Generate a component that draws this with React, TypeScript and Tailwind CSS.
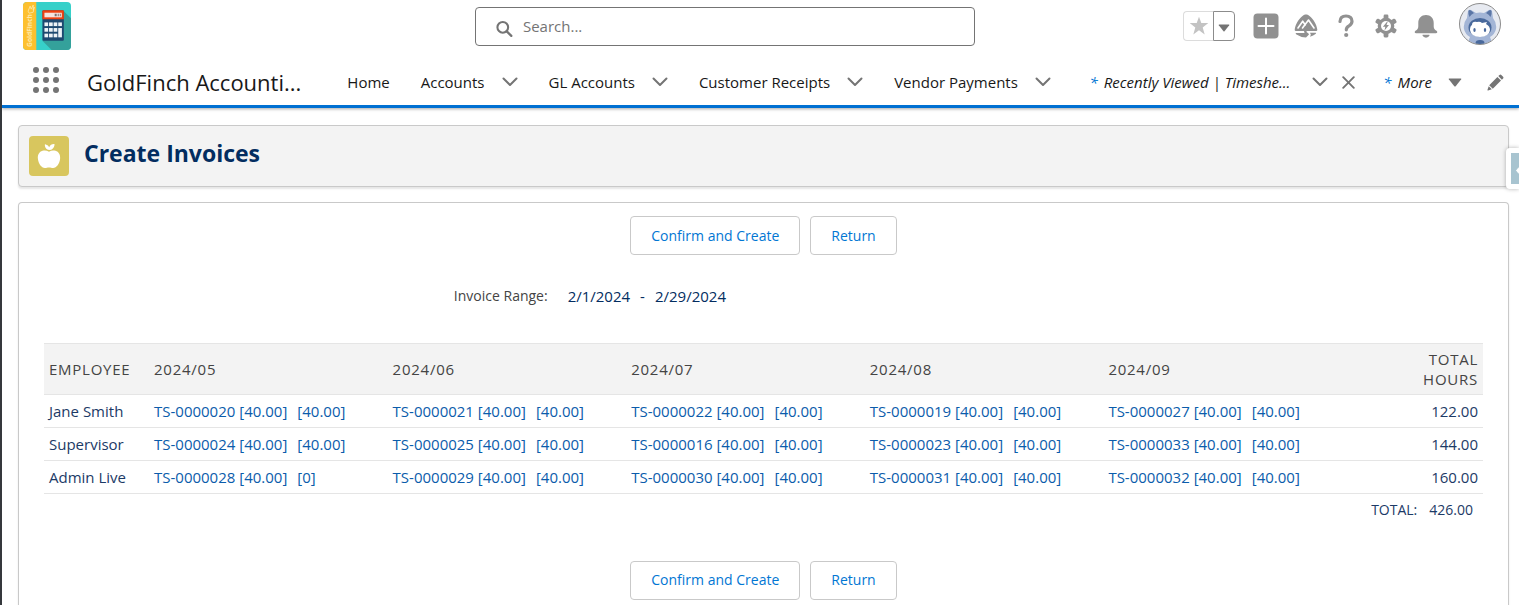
import { ReactNode } from 'react';

const tabs = ['Accounts', 'GL Accounts', 'Customer Receipts', 'Vendor Payments'];

const periods = ['2024/05', '2024/06', '2024/07', '2024/08', '2024/09'];

const rows = [
  {
    employee: 'Jane Smith',
    sheets: [
      ['TS-0000020', '40.00', '40.00'],
      ['TS-0000021', '40.00', '40.00'],
      ['TS-0000022', '40.00', '40.00'],
      ['TS-0000019', '40.00', '40.00'],
      ['TS-0000027', '40.00', '40.00']
    ],
    total: '122.00'
  },
  {
    employee: 'Supervisor',
    sheets: [
      ['TS-0000024', '40.00', '40.00'],
      ['TS-0000025', '40.00', '40.00'],
      ['TS-0000016', '40.00', '40.00'],
      ['TS-0000023', '40.00', '40.00'],
      ['TS-0000033', '40.00', '40.00']
    ],
    total: '144.00'
  },
  {
    employee: 'Admin Live',
    sheets: [
      ['TS-0000028', '40.00', '0'],
      ['TS-0000029', '40.00', '40.00'],
      ['TS-0000030', '40.00', '40.00'],
      ['TS-0000031', '40.00', '40.00'],
      ['TS-0000032', '40.00', '40.00']
    ],
    total: '160.00'
  }
];

function Logo() {
  return (
    <svg viewBox="0 0 47 47" className="h-12 w-12 shrink-0" role="img" aria-label="GoldFinch">
      <defs>
        <clipPath id="logo-clip">
          <rect width="47" height="47" rx="4" />
        </clipPath>
      </defs>
      <g clipPath="url(#logo-clip)">
        <rect width="47" height="47" fill="#37d0c9" />
        <path d="M40 9l7 7v31H28l-9-9z" fill="#34a19b" />
        <rect width="13" height="47" fill="#fdc02f" />
        <text x="-44" y="9" transform="rotate(-90)" fontSize="6.500" fontWeight="700" fill="#fde9a9" fontFamily="Open Sans, sans-serif">
          GoldFinch
        </text>
        <path d="M5 9l2-5 1 3 2-4v5l1-3-1 5-4 1z" fill="none" stroke="#fde9a9" strokeWidth=".8" />
        <rect x="19" y="8" width="21" height="30" rx="1" fill="#1d4870" />
        <path d="M19 17V9a1 1 0 011-1h19a1 1 0 011 1v8z" fill="#ee4211" />
        <rect x="21" y="10.500" width="17" height="4.500" fill="#f6e5df" />
        <path d="M31 11.500h2v2.500h-2zM34 11.500h1v2.500h-1zM36 11.500h1v2.500h-1z" fill="#7c706f" />
        <g fill="#eef3f7">
          <rect x="21" y="20" width="3.600" height="3.600" />
          <rect x="25.500" y="20" width="3.600" height="3.600" />
          <rect x="30" y="20" width="3.600" height="3.600" />
          <rect x="34.500" y="20" width="3.600" height="3.600" />
          <rect x="21" y="25.500" width="3.600" height="3.600" />
          <rect x="25.500" y="25.500" width="3.600" height="3.600" />
          <rect x="30" y="25.500" width="3.600" height="3.600" />
          <rect x="34.500" y="25.500" width="3.600" height="9.100" />
          <rect x="21" y="31" width="3.600" height="3.600" />
          <rect x="25.500" y="31" width="3.600" height="3.600" />
          <rect x="30" y="31" width="3.600" height="3.600" />
        </g>
      </g>
    </svg>
  );
}

function Avatar() {
  return (
    <svg viewBox="0 0 42 42" className="h-[42px] w-[42px]">
      <defs>
        <clipPath id="avatar-clip">
          <circle cx="21" cy="21" r="20" />
        </clipPath>
      </defs>
      <circle cx="21" cy="21" r="20.500" fill="#e7eaf1" />
      <g clipPath="url(#avatar-clip)">
        <path d="M9 8q1-2 3-1l5 3q4-1 8 0l5-3q2-1 3 1l1 7q4 5 3 11-1 5-6 8l3 8H8l3-8q-5-3-6-8-1-6 3-11z" fill="#a3b5d6" />
        <path d="M9.500 8q1-1.500 2.500-.5l3 2.500q-3 1.500-4.500 4-1.500-3-1-6zM32.500 8q-1-1.500-2.500-.5L27 10q3 1.500 4.500 4 1.500-3 1-6z" fill="#5b76a6" />
        <ellipse cx="21" cy="24.500" rx="11.500" ry="9.500" fill="#49699c" />
        <path d="M11 27q0-4 2-5 0-4 5-3 3-1 5 1l5-1-1 2q4 2 4 6-1 7-10 7T11 27z" fill="#fff" />
        <ellipse cx="15.500" cy="27" rx="1.200" ry="1.900" fill="#49699c" />
        <ellipse cx="26" cy="27" rx="1.200" ry="1.900" fill="#49699c" />
        <ellipse cx="21" cy="40" rx="4.500" ry="3" fill="#49699c" />
      </g>
      <circle cx="21" cy="21" r="20.500" fill="none" stroke="#8c8c8c" />
    </svg>
  );
}

function Chevron() {
  return (
    <svg viewBox="0 0 16 10" className="h-[10px] w-4">
      <path d="M1.500 1.500L8 8l6.500-6.500" fill="none" stroke="#747474" strokeWidth="2" strokeLinecap="round" strokeLinejoin="round" />
    </svg>
  );
}

function IconButton({ label, children }: { label: string; children: ReactNode }) {
  return (
    <button aria-label={label} className="flex h-[26px] w-[26px] items-center justify-center text-[#919191]">
      {children}
    </button>
  );
}

function HeaderIcons() {
  return (
    <div className="flex items-center gap-5">
      <div className="flex items-center gap-[14px] pt-1">
        <div className="mr-1 flex">
          <button aria-label="Favorite" className="flex h-[30px] w-[30px] items-center justify-center rounded-l border border-r-0 border-[#dcdcdc]">
            <svg viewBox="0 0 20 20" className="h-5 w-5">
              <path d="M10 .8l2.300 6.300h7l-5.600 4.300 2 7.100L10 14.300l-5.700 4.200 2-7.100L.7 7.100h7z" fill="#c3c3c3" />
            </svg>
          </button>
          <button aria-label="Favorites list" className="flex h-[30px] w-[22px] items-center justify-center rounded-r border border-[#8c8c8c]">
            <svg viewBox="0 0 12 8" className="mt-1 h-2 w-3">
              <path d="M1.200.5h9.600q.8 0 .4.700L6.500 7.200q-.5.500-1 0L.8 1.200Q.4.500 1.200.5z" fill="#747474" />
            </svg>
          </button>
        </div>
        <IconButton label="Global actions">
          <svg viewBox="0 0 26 26" className="h-[26px] w-[26px]">
            <rect x=".5" y=".5" width="25" height="25" rx="4" fill="currentColor" />
            <path d="M13 5.500v15M5.500 13h15" stroke="#fff" strokeWidth="2" strokeLinecap="round" />
          </svg>
        </IconButton>
        <IconButton label="Guidance center">
          <svg viewBox="0 0 24 24" className="h-6 w-6">
            <path d="M12 .5c1 0 2.200.4 3.500 1.400C19.500 5 22.500 10 23.300 15.500q.2 1.500-1.300 1.500h-8.500q-1.500 0-1 .9l2 1.600q1.200 1.200-.5 2L12 23.500q-5.500-.2-9.500-3-1.500-1-.5-1.500h8.500L10 17H2q-1.500 0-1.300-1.500C1.500 10 4.500 5 8.500 1.900 9.800.9 11 .5 12 .5z" fill="currentColor" />
            <path d="M16 18.800h5.800q.8.400-.3 1.300-2 1.800-5.500 2.700 1.700-2.200 0-4z" fill="currentColor" />
            <path d="M4 14l4.700-6.800 2.600 3.800M8.500 14l6-8 5.500 8" fill="none" stroke="#fff" strokeWidth="1.600" strokeLinejoin="round" strokeLinecap="round" />
          </svg>
        </IconButton>
        <IconButton label="Help">
          <svg viewBox="0 0 16 24" className="h-6 w-4">
            <path d="M2 7.500Q2.200 2 8 2t6 5.200q0 2.800-3 4.600-2.700 1.500-2.700 4" fill="none" stroke="currentColor" strokeWidth="3.200" strokeLinecap="round" />
            <circle cx="8.200" cy="21" r="2.100" fill="currentColor" />
          </svg>
        </IconButton>
        <IconButton label="Setup">
          <svg viewBox="0 0 24 24" className="h-6 w-6">
            <g fill="currentColor">
              <circle cx="12" cy="12" r="8.300" />
              <rect x="9.600" y=".6" width="4.800" height="22.800" rx="1.300" />
              <rect x="9.600" y=".6" width="4.800" height="22.800" rx="1.300" transform="rotate(60 12 12)" />
              <rect x="9.600" y=".6" width="4.800" height="22.800" rx="1.300" transform="rotate(120 12 12)" />
            </g>
            <circle cx="12" cy="12" r="5" fill="#fff" />
            <path d="M13.200 7.500L8.900 12.700h2.400l-.8 3.800 4.500-5.400h-2.500l1.300-3.600z" fill="currentColor" />
          </svg>
        </IconButton>
        <IconButton label="Notifications">
          <svg viewBox="0 0 24 24" className="h-6 w-6">
            <path d="M12 1c4.600 0 7.700 3.300 7.700 7.700v3.500c0 2.300 1 3.300 2.800 4.600 1.300 1 .9 2.500-.6 2.500H2.100c-1.500 0-1.900-1.500-.6-2.500 1.800-1.300 2.800-2.300 2.800-4.600V8.700C4.300 4.300 7.400 1 12 1zM8.800 20.800h6.400q.6 0 .3.800Q14.500 23.700 12 23.700t-3.500-2.100q-.3-.8.300-.8z" fill="currentColor" />
          </svg>
        </IconButton>
      </div>
      <button aria-label="View profile">
        <Avatar />
      </button>
    </div>
  );
}

function NavBar() {
  return (
    <nav className="flex h-[53px] items-center border-b-[3px] border-[#0070d2] pt-1 pr-[15px] pl-[31px] text-[15px] whitespace-nowrap text-[#181818]">
      <button aria-label="App launcher" className="mr-7 shrink-0 pb-1">
        <svg viewBox="0 0 26 26" className="h-[26px] w-[26px]" fill="#747474">
          {[3, 13, 23].map((y) => [3, 13, 23].map((x) => <circle key={`${x}-${y}`} cx={x} cy={y} r="3" />))}
        </svg>
      </button>
      <span className="mr-[46px] text-[22px] leading-7">GoldFinch Accounti...</span>
      <div className="flex items-center gap-[31px]">
        <a href="#">Home</a>
        {tabs.map((tab) => (
          <div key={tab} className="flex items-center gap-[17px]">
            <a href="#">{tab}</a>
            <button aria-label={`${tab} list`}>
              <Chevron />
            </button>
          </div>
        ))}
      </div>
      <div className="ml-auto flex items-center italic">
        <a href="#" className="flex gap-[6px]">
          <span className="text-[#0176d3]">*</span>
          <span>Recently Viewed | Timeshe...</span>
        </a>
        <button aria-label="Tab actions" className="ml-[22px]">
          <Chevron />
        </button>
        <button aria-label="Close tab" className="ml-[14px]">
          <svg viewBox="0 0 13 13" className="h-[13px] w-[13px]">
            <path d="M1.200 1.200l10.600 10.600M11.800 1.200L1.200 11.800" stroke="#747474" strokeWidth="1.900" strokeLinecap="round" />
          </svg>
        </button>
        <button className="ml-7 flex items-center gap-4 italic">
          <span className="flex gap-[6px]">
            <span className="text-[#0176d3]">*</span>
            <span>More</span>
          </span>
          <svg viewBox="0 0 14 9" className="h-[9px] w-[14px]">
            <path d="M1.300.5h11.400q1 0 .5.800L7.700 8.200q-.7.700-1.400 0L.8 1.300Q.3.500 1.300.5z" fill="#747474" />
          </svg>
        </button>
        <button aria-label="Edit navigation" className="ml-[25px]">
          <svg viewBox="0 0 17 17" className="h-[17px] w-[17px]" fill="#747474">
            <path d="M2.200 11.200l8.200-8.200 3.600 3.600-8.200 8.200zM11.300 2.100l1.200-1.200q.9-.9 1.800 0l1.800 1.800q.9.900 0 1.800l-1.200 1.200zM1.700 12.200l3.100 3.100-3.700 1.200q-.9.200-.6-.7z" />
          </svg>
        </button>
      </div>
    </nav>
  );
}

function Actions() {
  return (
    <div className="flex justify-center gap-[10px] text-sm text-[#0176d3]">
      <button className="h-[39px] rounded border border-[#c9c9c9] bg-white px-5">Confirm and Create</button>
      <button className="h-[39px] rounded border border-[#c9c9c9] bg-white px-5">Return</button>
    </div>
  );
}

function TimesheetTable() {
  return (
    <table className="mt-9 w-full table-fixed text-[15px] text-[#1c3a66]">
      <colgroup>
        <col className="w-[105px]" />
        {periods.map((period) => (
          <col key={period} />
        ))}
        <col className="w-[141px]" />
      </colgroup>
      <thead>
        <tr className="h-[51px] border-y border-[#e5e5e5] bg-[#f3f3f3] text-left leading-5 tracking-wider text-[#444444] uppercase">
          <th className="px-[5px] font-normal">Employee</th>
          {periods.map((period) => (
            <th key={period} className="px-[5px] font-normal">
              {period}
            </th>
          ))}
          <th className="px-[5px] text-right font-normal">
            Total
            <br />
            Hours
          </th>
        </tr>
      </thead>
      <tbody>
        {rows.map((row) => (
          <tr key={row.employee} className="h-[33px] border-b border-[#e5e5e5]">
            <td className="px-[5px]">{row.employee}</td>
            {row.sheets.map(([name, hours, billed]) => (
              <td key={name} className="px-[5px] whitespace-nowrap text-[#0b5cab]">
                <a href="#">
                  {name} [{hours}]
                </a>
                <a href="#" className="ml-[10px]">
                  [{billed}]
                </a>
              </td>
            ))}
            <td className="px-[5px] text-right">{row.total}</td>
          </tr>
        ))}
      </tbody>
      <tfoot>
        <tr className="h-8 text-sm">
          <td colSpan={7} className="pr-[10px] text-right">
            TOTAL:<span className="ml-3">426.00</span>
          </td>
        </tr>
      </tfoot>
    </table>
  );
}

export default function App() {
  return (
    <div className="relative flex min-h-screen flex-col overflow-hidden border-l-2 border-[#35383c] bg-white font-['Open_Sans','Noto_Sans',sans-serif]">
      <header className="shadow-[0_1px_3px_rgba(0,0,0,0.35)]">
        <div className="flex h-[55px] items-start pr-[18px] pl-[21px]">
          <div className="flex w-[452px] pt-[2px]">
            <Logo />
          </div>
          <label className="mt-[7px] flex h-[39px] max-w-[500px] flex-1 items-center gap-[10px] rounded border border-[#747474] px-5">
            <svg viewBox="0 0 18 18" className="mt-1 h-[18px] w-[18px]">
              <circle cx="7.200" cy="7.200" r="5.700" fill="none" stroke="#747474" strokeWidth="2.200" />
              <path d="M11.500 11.500l4.800 4.800" stroke="#747474" strokeWidth="2.400" strokeLinecap="round" />
            </svg>
            <input type="search" aria-label="Search" placeholder="Search..." className="w-full text-[15px] outline-none placeholder:text-[#747474]" />
          </label>
          <div className="ml-auto pt-[3px]">
            <HeaderIcons />
          </div>
        </div>
        <NavBar />
      </header>

      <main className="flex flex-1 flex-col gap-[15px] pt-[17px] pr-[10px] pl-4">
        <section className="flex h-[62px] items-start gap-[15px] rounded border border-[#c9c9c9] bg-[#f3f3f3] p-[10px] shadow-[0_2px_2px_rgba(0,0,0,0.1)]">
          <svg viewBox="0 0 40 40" className="h-10 w-10">
            <rect width="40" height="40" rx="4" fill="#d8c65e" />
            <path d="M20 15.800c2-1.400 4.300-1.600 6.500-1 3.300 1 5 4 4.600 8-.5 5-3.500 9.200-7 9.200-1.500 0-2.500-.6-4.100-.6s-2.600.6-4.100.6c-3.500 0-6.500-4.200-7-9.200-.4-4 1.300-7 4.600-8 2.200-.6 4.500-.4 6.500 1z" fill="#fff" />
            <path d="M15.800 9.300q-.2-1.200 1-.9 2.600.6 3.400 2.900Q21.500 8 25 8q.7 0 .6.800-.8 4.500-4.600 5.300-4.800-.3-5.200-4.800z" fill="#fff" />
          </svg>
          <h1 className="text-[23px] leading-[34px] font-bold text-[#032d60]">Create Invoices</h1>
        </section>

        <section className="flex-1 rounded-t border border-b-0 border-[#c9c9c9] px-[25px] pt-[13px] pb-1 shadow-[0_2px_2px_rgba(0,0,0,0.1)]">
          <Actions />
          <div className="mt-[30px] flex items-center gap-5 text-sm leading-[22px]">
            <span className="w-[35%] text-right text-[#444444]">Invoice Range:</span>
            <span className="text-[15px] text-[#032d60]">
              2/1/2024<span className="mx-[10px]">-</span>2/29/2024
            </span>
          </div>
          <TimesheetTable />
          <div className="mt-[35px]">
            <Actions />
          </div>
        </section>
      </main>

      {/* collapsed side panel handle */}
      <button aria-label="Open panel" className="absolute top-[148px] right-0 rounded-l bg-white py-[5px] pl-[5px] shadow-[0_0_4px_rgba(0,0,0,0.3)]">
        <svg viewBox="0 0 8 31" className="h-[31px] w-2">
          <rect width="8" height="31" fill="#a8c4d0" />
          <path d="M8 14.500L5.500 17.500l2.500 3" fill="#fff" stroke="#fff" />
        </svg>
      </button>
    </div>
  );
}
